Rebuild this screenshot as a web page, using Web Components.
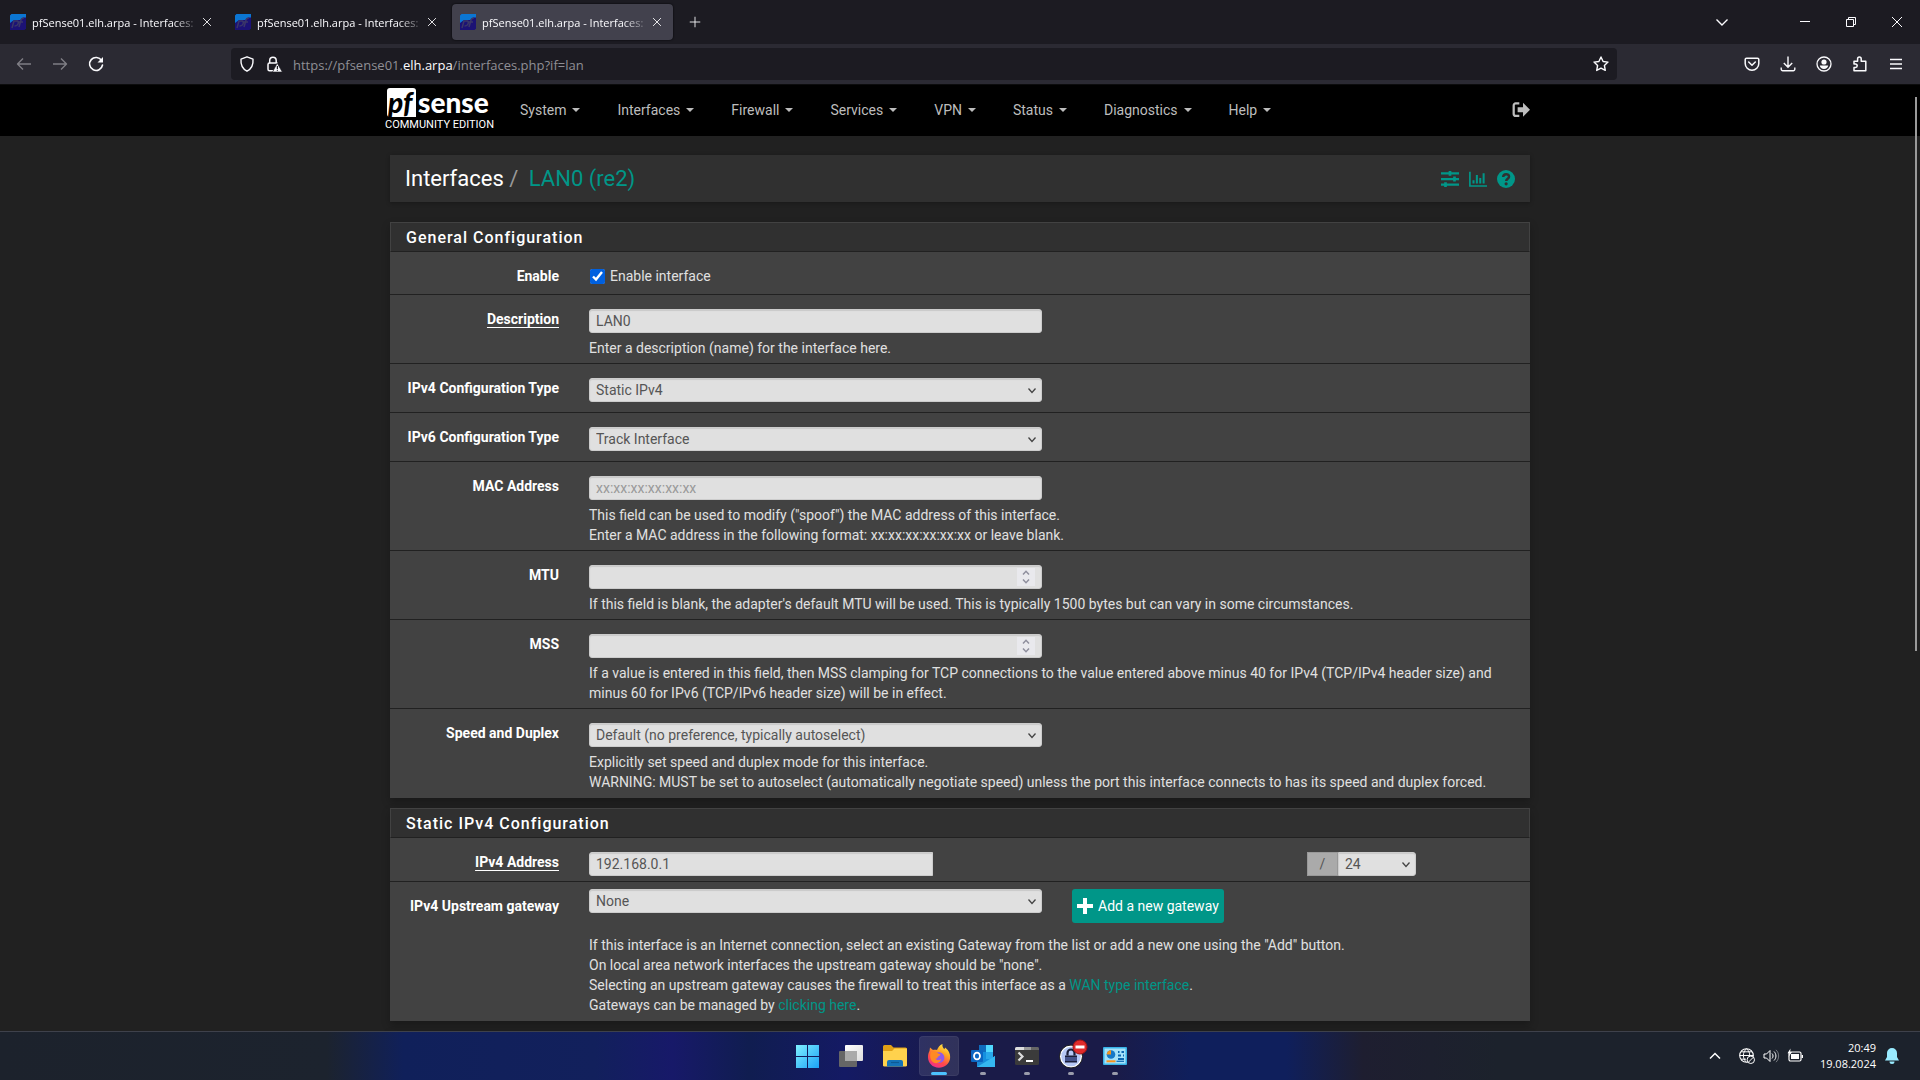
<!DOCTYPE html>
<html lang="en">
<head>
<meta charset="utf-8">
<title>pfSense01.elh.arpa - Interfaces: LAN0 (re2)</title>
<style>
    * {
        box-sizing: border-box;
    }

    body {
        margin: 0px;
        height: 100vh;
        overflow: hidden;
        background: #212121;
        font-family: Roboto, "Liberation Sans", sans-serif;
    }

    desktop-shell a {
        color: #009688;
        text-decoration: none;
    }
</style>
</head>
<body>

<desktop-shell>
    <browser-tabs slot="top"></browser-tabs>
    <browser-toolbar slot="top"></browser-toolbar>

    <pf-navbar></pf-navbar>
    <pf-container>
        <pf-breadcrumb section="Interfaces" page="LAN0 (re2)"></pf-breadcrumb>

        <pf-panel heading="General Configuration">
            <pf-field kind="checkbox" label="Enable" value="Enable interface"></pf-field>
            <pf-field kind="text" label="Description" value="LAN0" required>Enter a description (name) for the interface here.</pf-field>
            <pf-field kind="select" label="IPv4 Configuration Type" value="Static IPv4"></pf-field>
            <pf-field kind="select" label="IPv6 Configuration Type" value="Track Interface"></pf-field>
            <pf-field kind="text" label="MAC Address" placeholder="xx:xx:xx:xx:xx:xx">This field can be used to modify ("spoof") the MAC address of this interface.<br>Enter a MAC address in the following format: xx:xx:xx:xx:xx:xx or leave blank.</pf-field>
            <pf-field kind="number" label="MTU">If this field is blank, the adapter's default MTU will be used. This is typically 1500 bytes but can vary in some circumstances.</pf-field>
            <pf-field kind="number" label="MSS">If a value is entered in this field, then MSS clamping for TCP connections to the value entered above minus 40 for IPv4 (TCP/IPv4 header size) and minus 60 for IPv6 (TCP/IPv6 header size) will be in effect.</pf-field>
            <pf-field kind="select" label="Speed and Duplex" value="Default (no preference, typically autoselect)">Explicitly set speed and duplex mode for this interface.<br>WARNING: MUST be set to autoselect (automatically negotiate speed) unless the port this interface connects to has its speed and duplex forced.</pf-field>
        </pf-panel>

        <pf-panel heading="Static IPv4 Configuration">
            <pf-field kind="address" label="IPv4 Address" value="192.168.0.1" mask="24" required></pf-field>
            <pf-field kind="gateway" label="IPv4 Upstream gateway" value="None" action="Add a new gateway">If this interface is an Internet connection, select an existing Gateway from the list or add a new one using the "Add" button.<br>On local area network interfaces the upstream gateway should be "none".<br>Selecting an upstream gateway causes the firewall to treat this interface as a <a href="#wan">WAN type interface</a>.<br>Gateways can be managed by <a href="#gateways">clicking here</a>.</pf-field>
        </pf-panel>

        <pf-panel></pf-panel>
    </pf-container>

    <win-taskbar slot="bottom"></win-taskbar>
</desktop-shell>

<script>
    // Line icons, stroked with the current colour on a 16px grid
    const icons = {
        close: '<path d="M3.5 3.5l9 9M12.5 3.5l-9 9"/>',
        plus: '<path d="M8 2v12M2 8h12"/>',
        down: '<path d="M2.5 5.5L8 11l5.5-5.5" stroke-width="1.4"/>',
        minimise: '<path d="M3 7.5h10"/>',
        restore: '<path d="M3.5 5.5h7v7h-7zM5.5 5.5v-2h7v7h-2"/>',
        winclose: '<path d="M3 3l10 10M13 3L3 13"/>',
        back: '<path d="M15 8H1.5M7 2.5L1.5 8 7 13.5" stroke-width="1.4" stroke-linejoin="round"/>',
        forward: '<path d="M1 8h13.5M9 2.5L14.5 8 9 13.5" stroke-width="1.4" stroke-linejoin="round"/>',
        reload: '<path d="M13.6 4.5A6.5 6.5 0 1 0 14.5 9" stroke-width="1.6" stroke-linecap="round"/><path d="M15 1v5.5H9.5z" fill="currentColor" stroke="none"/>',
        shield: '<path d="M8 .8l6 2.4c.4 4.6-.5 9-6 12-5.500-3-6.400-7.400-6-12z" stroke-width="1.4" stroke-linejoin="round"/>',
        lock: '<path d="M7 14.8H3.5A1.5 1.5 0 0 1 2 13.3V8.5A1.5 1.5 0 0 1 3.500 7h8M3.700 7V4.500a3.200 3.200 0 0 1 6.500 0V7" stroke-width="1.5"/><path d="M11.200 7.200L16.300 16H6.500z" fill="currentColor" stroke="#1c1b22" stroke-width=".6"/><path d="M11.400 10v3M11.400 13.800v1" stroke="#1c1b22" stroke-width="1.2"/>',
        star: '<path d="M8 1l2.1 4.5 4.9.6-3.6 3.4.9 4.9L8 12.1l-4.3 2.3.9-4.9L1 6.100l4.900-.6z" stroke-width="1.4" stroke-linejoin="round"/>',
        pocket: '<path d="M2.5 2.2h11a1.3 1.3 0 0 1 1.3 1.3V7.500a6.800 6.800 0 0 1-13.600 0V3.500a1.300 1.300 0 0 1 1.300-1.300zM4.700 6L8 9.200 11.300 6" stroke-width="1.5" stroke-linecap="round" stroke-linejoin="round"/>',
        download: '<path d="M8 .5v10.5M3.8 7L8 11.2 12.2 7M1.200 11.500v1.700a1.500 1.500 0 0 0 1.500 1.500h10.600a1.500 1.500 0 0 0 1.500-1.500v-1.700" stroke-width="1.4"/>',
        account: '<circle cx="8" cy="8" r="7" stroke-width="1.3"/><circle cx="8" cy="6" r="2.6" fill="currentColor" stroke="none"/><path d="M3.8 9.6h8.400c-.3 2.200-2 3.400-4.200 3.400s-3.900-1.200-4.200-3.400z" fill="currentColor" stroke="none"/>',
        extension: '<path d="M2 5.200h3.600V2.900a1.800 1.800 0 0 1 3.600 0v2.300h4.600v9.600H2v-3.300h1.500a1.700 1.700 0 0 0 0-3.400H2z" stroke-width="1.5" stroke-linejoin="round"/>',
        menu: '<path d="M2 3.5h12M2 8h12M2 12.5h12" stroke-width="1.4"/>',
        select: '<path d="M4.5 6.500L8 10.500l3.500-4" stroke-width="1.3"/>',
        spin: '<path d="M5 5.500l3-3.200 3 3.200M5 10.500l3 3.200 3-3.200" stroke-width="1.5"/>',
        logout: '<path d="M6.500 2.200H3.200A1.700 1.700 0 0 0 1.500 3.900v7.700a1.700 1.700 0 0 0 1.700 1.700h3.300" stroke-width="2"/><path d="M9.800 1.500l6.200 6.300-6.200 6.300v-4H5V5.500h4.800z" fill="currentColor" stroke="none"/>',
        sliders: '<path d="M0 3h16M0 8h16M0 13h16" stroke-width="2"/><path d="M8 .8v4.400M12 5.800v4.400M4 10.800v4.400" stroke-width="2.4"/>',
        chart: '<path d="M.8 1.500v12.700H16" stroke-width="1.5"/><path d="M4 12V9M7 12V4.500M10 12V7M13 12V2.800" stroke-width="1.8"/>',
        help: '<circle cx="8" cy="8" r="8" fill="currentColor" stroke="none"/><path d="M5.500 6.200C5.600 2.800 10.800 3 10.700 6c0 1.800-2.500 1.800-2.500 3.800" stroke="#303030" stroke-width="2.2"/><circle cx="8.1" cy="12.3" r="1.4" fill="#303030" stroke="none"/>',
        add: '<path d="M8 0v16M0 8h16" stroke-width="4"/>',
        up: '<path d="M3 10.500l5-5 5 5" stroke-width="1.5"/>',
        globe: '<circle cx="7.5" cy="7.5" r="6.8" stroke-width="1.1"/><path d="M.7 7.500h13.600M2 3.800h11M2 11.200h5M7.500.7c-4.200 4-4.200 9.600 0 13.600M7.500.7c2.400 2 3.300 4.500 3.200 7"/><circle cx="11.8" cy="11.8" r="3.7" fill="#1c222c"/><path d="M9.200 14.400l5.200-5.200"/>',
        speaker: '<path d="M1 6h2.500L7 2.500v11L3.500 10H1z" stroke-linejoin="round"/><path d="M9 5.500c1.400 1.500 1.400 3.500 0 5M11 3.500c2.600 2.600 2.600 6.400 0 9"/><path d="M13 1.800c3.500 3.600 3.500 8.800 0 12.400" opacity=".4"/>',
        battery: '<rect x="2" y="4" width="12" height="9" rx="1.5" stroke-width="1.2"/><rect x="4" y="6" width="8" height="5" fill="currentColor" stroke="none"/><path d="M15.300 7v3" stroke-width="1.4"/><path d="M3.500.5L.5 5.200h2L1.500 9l3.500-5H3.200z" fill="currentColor" stroke="none"/>',
        bell: '<path d="M8 0a5 5 0 0 1 5 5v4l2 3.500H1L3 9V5a5 5 0 0 1 5-5zM5.500 13.500h5a2.500 2.500 0 0 1-5 0z" fill="currentColor" stroke="none"/>'
    };

    // Full colour taskbar icons on a 24px grid
    const apps = {
        start: '<defs><linearGradient id="g" x2="1" y2="1"><stop stop-color="#7ff0ff"/><stop offset="1" stop-color="#1ba1f7"/></linearGradient></defs><path d="M1 1h11v11H1zM13 1h11v11H13zM1 13h11v11H1zM13 13h11v11H13z" fill="url(#g)"/>',
        taskview: '<defs><linearGradient id="g" x2="1" y2="1"><stop stop-color="#fff"/><stop offset="1" stop-color="#ddd"/></linearGradient></defs><rect x="6" y="1" width="18" height="16" rx="1" fill="url(#g)"/><rect y="7" width="18" height="16" rx="1" fill="#666"/><path d="M6 7h12v10H6z" fill="#aaa"/>',
        explorer: '<path d="M0 2.500Q0 1 1.500 1H8l2.500 2.500H22.500Q24 3.500 24 5v17H0z" fill="#e0a015"/><path d="M0 7h9l2.500-2.500H24V21q0 1.500-1.500 1.500h-21Q0 22.500 0 21z" fill="#ffd24d"/><path d="M4 22.500V18q0-2 2-2h12q2 0 2 2v4.500z" fill="#1473b8"/><path d="M8 18.500h8" stroke="#0d5a94" stroke-width="1.2"/>',
        firefox: '<defs><linearGradient id="g" x1=".8" x2=".3" y2="1"><stop stop-color="#fff44f"/><stop offset=".35" stop-color="#ffa722"/><stop offset=".7" stop-color="#ff4a4a"/><stop offset="1" stop-color="#f0308a"/></linearGradient></defs><path d="M15.500 0c-.5 2.500.5 3.800 2 5.300l.5-1.800c4.400 3 5.700 7.500 5 11.500-1 5-5.500 8.700-11 8.700C5.500 23.700 1 19 1 13c0-2.500.6-4.500 1.500-6L3 3.500 6 6c1.500-.5 3-.3 4 0 1-2.500 2.500-5 5.500-6z" fill="url(#g)"/><path d="M8 8.500c3 0 4.500-1 6.800.5 4 2.500 3.500 9.500-2.300 10-5 .3-7.500-4-5.500-7.500l3.500-.5z" fill="#9059e8"/><path d="M4 8c3-1.500 5-.8 6.500.8 1 1.200 2.200 1 3 1.500-.3 1.500-2 1.500-2.500 2.500-.6 1.200-1 2-2.800 1.800 1.500 2 4.300 2.200 6 .5-.5 3.500-4.700 5-7.700 3.400C3 16.500 2.500 11 4 8z" fill="#ff8a24"/>',
        outlook: '<path d="M8 1h14v20H8z" fill="#1490df"/><path d="M15 1h7v7h-7z" fill="#50d9ff"/><path d="M8 1h7v7H8z" fill="#0f6cbd"/><path d="M15 8h7v7h-7z" fill="#28a8ea"/><path d="M6 12l9 6 9-6v11H6z" fill="#1a8cd8"/><path d="M6 23l18-11v11z" fill="#35b8f1"/><rect y="6" width="12" height="12" rx="1" fill="#0a66c2"/><ellipse cx="6" cy="12" rx="3" ry="3.4" fill="none" stroke="#fff" stroke-width="1.8"/>',
        terminal: '<rect y="3" width="24" height="18" rx="1.5" fill="#3b3b3b"/><path d="M0 6V4.500Q0 3 1.500 3H9v3z" fill="#ddd"/><path d="M9 3h7v3H9z" fill="#999"/><path d="M16 3h6.500Q24 3 24 4.500V6h-8z" fill="#666"/><path d="M3.500 8.500l4 4-4 4" fill="none" stroke="#ddd" stroke-width="2.2"/><path d="M11 17h7" stroke="#fff" stroke-width="2"/>',
        keepass: '<circle cx="12" cy="12.5" r="10.5" fill="#b6c8f5" stroke="#fff" stroke-width="1.5"/><circle cx="12" cy="12.5" r="11.5" fill="none" stroke="#222"/><path d="M6 11.500h12v7H6z" fill="#1b1f3a"/><path d="M8.500 11.500V9a3.500 3.500 0 0 1 7 0v2.500" fill="none" stroke="#1b1f3a" stroke-width="2.2"/><path d="M6 14h12M6 16h12" stroke="#6c84d8"/><circle cx="21" cy="3" r="7" fill="#e02b2b" stroke="#a01414"/><path d="M16.500 3h9" stroke="#fff" stroke-width="3"/>',
        control: '<rect y="3" width="24" height="18" rx="1" fill="#38b3e8"/><path d="M1.500 4.500h21v15h-21z" fill="#a5e2fa"/><circle cx="8" cy="10.5" r="4.3" fill="#1678c8"/><path d="M8 10.500V6.200a4.300 4.300 0 0 0-4.300 4.300z" fill="#f7941d"/><path d="M15 8h1.500M18.500 8H21M15 11.500h3M20 11.500h1M15 15h6" stroke="#0b67b2" stroke-width="2"/><path d="M3.500 17.300h9" stroke="#f7941d" stroke-width="2"/><path d="M13.500 17.300H21" stroke="#0b67b2" stroke-width="1.2"/>'
    };

    const favicon = `
        <svg viewBox="0 0 16 16" width="16" height="16">
            <path d="M1.500 0H16v14.500L14.500 16H0V1.500z" fill="#1c1275"/>
            <path d="M1.500 0H16v3.500C12 3 11 5 10.500 6H4L0 9V1.500z" fill="#0b76d3"/>
            <path d="M2 14l2-7h3.500q1.500.8.500 3t-3.500 2M9 13l2-7q.8-2.300 3-2M9 8h4" fill="none" stroke="#3b3768" stroke-width="1.5"/>
        </svg>`;

    // Base class: puts the markup of render() into an open shadow root
    class BaseElement extends HTMLElement {
        constructor() {
            super();
            this.attachShadow({ mode: "open" });
        }

        connectedCallback() {
            this.shadowRoot.innerHTML = `
                <style>
                    * {
                        box-sizing: border-box;
                        margin: 0px;
                        padding: 0px;
                    }

                    button {
                        display: grid;
                        place-items: center;
                        border: none;
                        background: none;
                        color: inherit;
                        font: inherit;
                    }
                </style>
                ${this.render()}
            `;
        }
    }

    class UiIcon extends BaseElement {
        render() {
            const size = this.getAttribute("size") || 16;
            return `
                <style>
                    :host { display: block; }
                    svg { display: block; overflow: visible; }
                </style>
                <svg viewBox="0 0 16 16" width="${size}" height="${size}" fill="none" stroke="currentColor" aria-hidden="true">${icons[this.getAttribute("name")]}</svg>
            `;
        }
    }

    class AppIcon extends BaseElement {
        render() {
            return `
                <style>
                    :host { display: block; }
                    svg { display: block; overflow: visible; }
                </style>
                <svg viewBox="0 0 24 24" width="24" height="24" aria-hidden="true">${apps[this.getAttribute("name")]}</svg>
            `;
        }
    }

    // Browser window above, taskbar below, the page in between
    class DesktopShell extends BaseElement {
        render() {
            return `
                <style>
                    :host {
                        display: flex;
                        flex-direction: column;
                        height: 100vh;
                    }

                    main {
                        position: relative;
                        flex: 1;
                        min-height: 0px;
                        overflow: hidden;
                        border-top: 1px solid #0c0c0d;
                    }

                    .scroll {
                        position: absolute;
                        top: 12px;
                        right: 3px;
                        width: 2px;
                        height: 554px;
                        background: #9a9a9a;
                    }
                </style>
                <slot name="top"></slot>
                <main>
                    <slot></slot>
                    <div class="scroll"></div>
                </main>
                <slot name="bottom"></slot>
            `;
        }
    }

    class BrowserTabs extends BaseElement {
        render() {
            const tab = active => `
                <div class="tab ${active}">
                    ${favicon}
                    <span>pfSense01.elh.arpa - Interfaces:</span>
                    <button aria-label="Close tab"><ui-icon name="close" size="14"></ui-icon></button>
                </div>`;
            return `
                <style>
                    :host {
                        display: flex;
                        align-items: center;
                        gap: 4px;
                        height: 44px;
                        padding-left: 2px;
                        background: #1c1b22;
                        color: #fbfbfe;
                        font-family: "Open Sans", sans-serif;
                        font-size: 11px;
                    }

                    .tab {
                        display: flex;
                        align-items: center;
                        width: 221px;
                        height: 36px;
                        padding: 0px 9px 0px 8px;
                        border-radius: 4px;
                    }

                    .active {
                        background: #42414d;
                        box-shadow: 0px 0px 2px #000;
                    }

                    /* Long titles fade out before the close button */
                    .tab span {
                        flex: 1;
                        margin-left: 6px;
                        white-space: nowrap;
                        mask-image: linear-gradient(90deg, #000 84%, transparent);
                    }

                    .new {
                        width: 36px;
                        height: 36px;
                    }

                    .list {
                        width: 37px;
                        margin-left: auto;
                        margin-right: 38px;
                    }

                    .window {
                        display: flex;
                    }

                    .window button {
                        width: 46px;
                        height: 44px;
                    }
                </style>
                ${tab("")}${tab("")}${tab("active")}
                <button class="new" aria-label="New tab"><ui-icon name="plus" size="14"></ui-icon></button>
                <button class="list" aria-label="List tabs"><ui-icon name="down"></ui-icon></button>
                <div class="window">
                    <button aria-label="Minimise"><ui-icon name="minimise"></ui-icon></button>
                    <button aria-label="Restore"><ui-icon name="restore"></ui-icon></button>
                    <button aria-label="Close"><ui-icon name="winclose"></ui-icon></button>
                </div>
            `;
        }
    }

    class BrowserToolbar extends BaseElement {
        render() {
            return `
                <style>
                    :host {
                        display: flex;
                        align-items: center;
                        height: 40px;
                        padding: 0px 6px;
                        background: #2b2a33;
                        color: #fbfbfe;
                        font-family: "Open Sans", sans-serif;
                        font-size: 13px;
                    }

                    button {
                        width: 36px;
                        height: 32px;
                    }

                    .off {
                        color: #7f7e85;
                    }

                    .url {
                        flex: 1;
                        display: flex;
                        align-items: center;
                        gap: 11px;
                        height: 32px;
                        margin: 0px 117px;
                        padding: 0px 8px;
                        border-radius: 4px;
                        background: #1c1b22;
                    }

                    .url p {
                        flex: 1;
                        padding-top: 2px;
                        color: #8f8f95;
                    }

                    .url b {
                        color: #fbfbfe;
                        font-weight: 400;
                    }
                </style>
                <button class="off" aria-label="Back"><ui-icon name="back"></ui-icon></button>
                <button class="off" aria-label="Forward"><ui-icon name="forward"></ui-icon></button>
                <button aria-label="Reload"><ui-icon name="reload"></ui-icon></button>
                <div class="url">
                    <ui-icon name="shield"></ui-icon>
                    <ui-icon name="lock"></ui-icon>
                    <p>https://pfsense01.<b>elh.arpa</b>/interfaces.php?if=lan</p>
                    <ui-icon name="star"></ui-icon>
                </div>
                <button aria-label="Pocket"><ui-icon name="pocket"></ui-icon></button>
                <button aria-label="Downloads"><ui-icon name="download"></ui-icon></button>
                <button aria-label="Account"><ui-icon name="account"></ui-icon></button>
                <button aria-label="Extensions"><ui-icon name="extension"></ui-icon></button>
                <button aria-label="Menu"><ui-icon name="menu"></ui-icon></button>
            `;
        }
    }

    class PfLogo extends BaseElement {
        render() {
            return `
                <style>
                    :host {
                        display: block;
                        width: 106px;
                        padding-top: 6px;
                        color: #fff;
                    }

                    .name {
                        display: flex;
                        gap: 2px;
                        height: 29px;
                        padding-left: 2px;
                        font: 900 28px/28px Lato, sans-serif;
                    }

                    .box {
                        width: 29px;
                        height: 29px;
                        padding-left: 1px;
                        border-radius: 3px 3px 0px 3px;
                        background: #fff;
                        color: #000;
                        font-style: italic;
                    }

                    .edition {
                        margin-top: 2px;
                        font: 400 11px/12px Roboto, sans-serif;
                        white-space: nowrap;
                    }
                </style>
                <div class="name"><span class="box">pf</span><span>sense</span></div>
                <div class="edition">COMMUNITY EDITION</div>
            `;
        }
    }

    class PfNavbar extends BaseElement {
        render() {
            const items = ["System", "Interfaces", "Firewall", "Services", "VPN", "Status", "Diagnostics", "Help"];
            return `
                <style>
                    :host {
                        display: block;
                        background: #000;
                    }

                    nav {
                        display: flex;
                        align-items: center;
                        max-width: 1150px;
                        height: 51px;
                        margin: 0px auto;
                        padding: 0px 5px 2px 0px;
                        font-size: 14px;
                    }

                    ul {
                        flex: 1;
                        display: flex;
                        gap: 37px;
                        margin-left: 29px;
                        list-style: none;
                    }

                    a {
                        display: flex;
                        align-items: center;
                        gap: 6px;
                        color: #bdbdbd;
                        line-height: 20px;
                        text-decoration: none;
                    }

                    .caret {
                        border: 4px solid transparent;
                        border-top-color: #bdbdbd;
                        border-bottom: none;
                    }
                </style>
                <nav>
                    <pf-logo></pf-logo>
                    <ul>${items.map(item => `<li><a href="#">${item}<span class="caret"></span></a></li>`).join("")}</ul>
                    <a href="#logout" aria-label="Logout"><ui-icon name="logout" size="18"></ui-icon></a>
                </nav>
            `;
        }
    }

    class PfContainer extends BaseElement {
        render() {
            return `
                <style>
                    :host {
                        display: block;
                        max-width: 1140px;
                        margin: 0px auto;
                        padding-top: 19px;
                    }
                </style>
                <slot></slot>
            `;
        }
    }

    class PfBreadcrumb extends BaseElement {
        render() {
            return `
                <style>
                    :host {
                        display: flex;
                        align-items: center;
                        gap: 10px;
                        height: 47px;
                        margin-bottom: 20px;
                        padding: 0px 15px;
                        background: #303030;
                        box-shadow: 0px 1px 4px rgba(0, 0, 0, 0.3);
                        color: #009688;
                        font-size: 22px;
                    }

                    h1 {
                        flex: 1;
                        color: #fff;
                        font: inherit;
                    }

                    i {
                        margin-right: 5px;
                        color: #999;
                        font-style: normal;
                    }

                    a {
                        color: #009688;
                        text-decoration: none;
                    }
                </style>
                <h1>${this.getAttribute("section")} <i>/</i> <a href="#">${this.getAttribute("page")}</a></h1>
                <a href="#settings" aria-label="Settings"><ui-icon name="sliders" size="18"></ui-icon></a>
                <a href="#graph" aria-label="Graph"><ui-icon name="chart" size="18"></ui-icon></a>
                <a href="#help" aria-label="Help"><ui-icon name="help" size="18"></ui-icon></a>
            `;
        }
    }

    class PfPanel extends BaseElement {
        render() {
            return `
                <style>
                    :host {
                        display: block;
                        margin-bottom: 10px;
                        background: #424242;
                        box-shadow: 0px 4px 8px rgba(0, 0, 0, 0.25);
                    }

                    h2 {
                        height: 30px;
                        padding: 0px 15px;
                        border: 1px solid #424242;
                        border-bottom-color: #212121;
                        background: #303030;
                        color: #fff;
                        font-size: 16px;
                        font-weight: 500;
                        letter-spacing: 1px;
                        line-height: 30px;
                    }
                </style>
                <h2>${this.getAttribute("heading") || ""}</h2>
                <slot></slot>
            `;
        }
    }

    // One form row: label, control and the slotted help text
    class PfField extends BaseElement {
        control() {
            const value = this.getAttribute("value") || "";
            const select = (id, text) => `
                <span class="stack">
                    <select id="${id}"><option>${text}</option></select>
                    <ui-icon name="select"></ui-icon>
                </span>`;

            switch (this.getAttribute("kind")) {
                case "checkbox":
                    return `<label class="check"><input type="checkbox" id="field" checked>${value}</label>`;
                case "select":
                    return select("field", value);
                case "number":
                    return `
                        <span class="stack">
                            <input type="number" id="field">
                            <ui-icon class="spin" name="spin"></ui-icon>
                        </span>`;
                case "address":
                    return `
                        <div class="address">
                            <input type="text" id="field" value="${value}">
                            <label for="mask">/</label>
                            ${select("mask", this.getAttribute("mask"))}
                        </div>`;
                case "gateway":
                    return `
                        <div class="gateway">
                            ${select("field", value)}
                            <button><ui-icon name="add"></ui-icon>${this.getAttribute("action")}</button>
                        </div>`;
                default:
                    return `<input type="text" id="field" value="${value}" placeholder="${this.getAttribute("placeholder") || ""}">`;
            }
        }

        render() {
            return `
                <style>
                    :host {
                        display: grid;
                        grid-template-columns: 169px 1fr;
                        column-gap: 30px;
                        padding: 14px 15px 5px 0px;
                        border-bottom: 1px solid #212121;
                        color: #e0e0e0;
                        font-size: 14px;
                        line-height: 20px;
                    }

                    :host(:last-child) {
                        border-bottom-color: #424242;
                    }

                    :host([kind="checkbox"]) {
                        padding-bottom: 8px;
                    }

                    :host([kind="select"]:empty) {
                        padding-bottom: 10px;
                    }

                    .label {
                        color: #fff;
                        font-weight: 700;
                        text-align: right;
                    }

                    :host([required]) .label {
                        text-decoration: underline 1px;
                        text-decoration-skip-ink: none;
                        text-underline-offset: 3px;
                    }

                    input, select {
                        display: block;
                        width: 100%;
                        max-width: 453px;
                        height: 24px;
                        padding: 0px 6px;
                        appearance: none;
                        border: 1px solid #ccc;
                        border-radius: 3px;
                        background: #e0e0e0;
                        box-shadow: inset 0px 1px 1px rgba(0, 0, 0, 0.1);
                        color: #555;
                        font: inherit;
                    }

                    input::placeholder {
                        color: #999;
                    }

                    input::-webkit-inner-spin-button {
                        display: none;
                    }

                    /* The arrow shares the grid cell of its control */
                    .stack {
                        display: grid;
                        grid-template-columns: minmax(0px, 453px);
                        align-items: center;
                    }

                    .stack > * {
                        grid-area: 1 / 1;
                    }

                    .stack ui-icon {
                        justify-self: end;
                        margin-right: 2px;
                        color: #444;
                        pointer-events: none;
                    }

                    .stack .spin {
                        margin-right: 7px;
                        padding: 1px;
                        background: #e9e9ed;
                        color: #8f8f9d;
                    }

                    .check {
                        display: flex;
                        align-items: center;
                        gap: 5px;
                    }

                    .check input {
                        width: 15px;
                        height: 15px;
                        margin-left: 1px;
                        appearance: auto;
                        accent-color: #0060df;
                        box-shadow: none;
                    }

                    .address {
                        display: flex;
                    }

                    .address input {
                        max-width: 344px;
                        border-radius: 3px 0px 0px 3px;
                    }

                    .address label {
                        width: 31px;
                        margin-left: auto;
                        border: 1px solid #999;
                        background: #aaa;
                        color: #555;
                        line-height: 22px;
                        text-align: center;
                    }

                    .address .stack {
                        grid-template-columns: 78px;
                        margin-right: 99px;
                    }

                    .address select {
                        border-radius: 0px 3px 3px 0px;
                    }

                    :host([kind="gateway"]) .control {
                        margin-top: -7px;
                    }

                    .gateway {
                        display: grid;
                        grid-template-columns: minmax(0px, 453px) auto;
                        justify-content: start;
                        align-items: start;
                        column-gap: 30px;
                        margin-bottom: 12px;
                    }

                    .gateway button {
                        display: flex;
                        align-items: center;
                        gap: 5px;
                        height: 34px;
                        padding: 0px 5px;
                        border-radius: 3px;
                        background: #009688;
                        color: #fff;
                    }

                    .help {
                        margin-top: 5px;
                    }

                    :host(:empty) .help {
                        display: none;
                    }
                </style>
                <label class="label" for="field">${this.getAttribute("label")}</label>
                <div class="control">
                    ${this.control()}
                    <div class="help"><slot></slot></div>
                </div>
            `;
        }
    }

    class WinTaskbar extends BaseElement {
        render() {
            const items = ["start", "taskview", "explorer", "firefox", "outlook", "terminal", "keepass", "control"];
            const state = name => name === "firefox" ? "active" : items.indexOf(name) > 3 ? "open" : "";
            return `
                <style>
                    :host {
                        display: grid;
                        grid-template-columns: 1fr auto 1fr;
                        align-items: center;
                        height: 49px;
                        border-top: 1px solid #3e414b;
                        background: linear-gradient(90deg, #1c222c 0%, #1c232e 17%, #10205a 21%, #12205c 31%, #171969 35%, #101d50 39%, #141a64 44%, #1a1b48 50%, #1a1b48 58%, #0f1f5c 62%, #0f1f5c 67%, #1e1e30 71%, #1c222c 78%);
                        color: #fff;
                        font-family: "Open Sans", sans-serif;
                        font-size: 11px;
                        line-height: 16px;
                    }

                    .apps {
                        display: flex;
                        grid-column: 2;
                        gap: 4px;
                        padding-left: 2px;
                    }

                    .apps button {
                        position: relative;
                        width: 40px;
                        height: 40px;
                        border-radius: 4px;
                    }

                    .active {
                        background: rgba(255, 255, 255, 0.1);
                        box-shadow: inset 0px 0px 0px 1px rgba(255, 255, 255, 0.05);
                    }

                    .active::after, .open::after {
                        content: "";
                        position: absolute;
                        bottom: 1px;
                        left: 17px;
                        width: 6px;
                        height: 3px;
                        border-radius: 2px;
                        background: #9a9cab;
                    }

                    .active::after {
                        left: 12px;
                        width: 16px;
                        background: #4cc2ff;
                    }

                    .tray {
                        display: flex;
                        justify-content: flex-end;
                        align-items: center;
                        gap: 8px;
                        padding-right: 20px;
                    }

                    .tray button {
                        margin-right: 8px;
                    }

                    .clock {
                        margin-left: 9px;
                        text-align: right;
                    }

                    .bell {
                        color: #99ebff;
                    }
                </style>
                <div class="apps">${items.map(name => `<button class="${state(name)}" aria-label="${name}"><app-icon name="${name}"></app-icon></button>`).join("")}</div>
                <div class="tray">
                    <button aria-label="Hidden icons"><ui-icon name="up"></ui-icon></button>
                    <ui-icon name="globe"></ui-icon>
                    <ui-icon name="speaker"></ui-icon>
                    <ui-icon name="battery"></ui-icon>
                    <div class="clock">20:49<br>19.08.2024</div>
                    <ui-icon class="bell" name="bell"></ui-icon>
                </div>
            `;
        }
    }

    // Register the components
    customElements.define("ui-icon", UiIcon);
    customElements.define("app-icon", AppIcon);
    customElements.define("desktop-shell", DesktopShell);
    customElements.define("browser-tabs", BrowserTabs);
    customElements.define("browser-toolbar", BrowserToolbar);
    customElements.define("pf-logo", PfLogo);
    customElements.define("pf-navbar", PfNavbar);
    customElements.define("pf-container", PfContainer);
    customElements.define("pf-breadcrumb", PfBreadcrumb);
    customElements.define("pf-panel", PfPanel);
    customElements.define("pf-field", PfField);
    customElements.define("win-taskbar", WinTaskbar);
</script>
</body>
</html>
